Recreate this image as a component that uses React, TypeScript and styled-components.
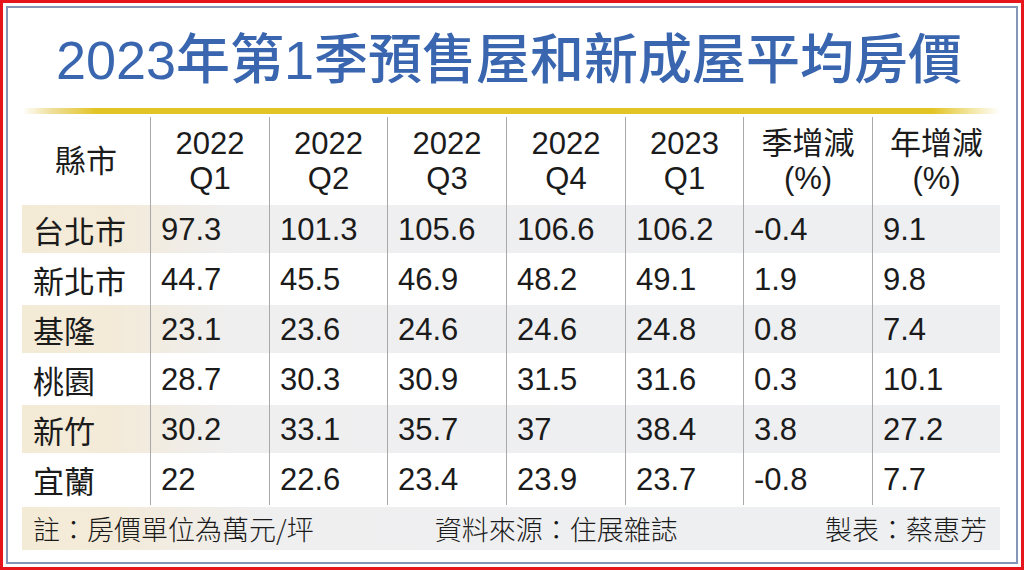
import React from "react";
import styled, { createGlobalStyle } from "styled-components";

const Global = createGlobalStyle`
  html, body { margin: 0; padding: 0; background: #fff; }
  body { font-family: "Liberation Sans", "Noto Sans CJK TC", sans-serif; }
  * { box-sizing: border-box; }
`;

const Frame = styled.div`
  width: 1024px;
  height: 570px;
  border: 3px solid #e6151c;
  padding: 3px;
  background: #fff;
`;

const Inner = styled.div`
  height: 100%;
  border: 2px solid #8396b8;
  padding: 26px 16px 0 14px;
  display: flex;
  flex-direction: column;
`;

const Title = styled.h1`
  margin: 0;
  height: 52px;
  line-height: 52px;
  font-size: 54px;
  font-weight: 500;
  color: #3a66b0;
  text-align: center;
  font-family: "Liberation Sans", "Noto Sans CJK TC", sans-serif;
  padding-right: 4px;
`;

const GoldLine = styled.div`
  margin-top: 22px;
  height: 6px;
  background: linear-gradient(
    90deg,
    rgba(227, 197, 33, 0) 0,
    rgba(232, 208, 110, 0.7) 30px,
    #e2c424 75px,
    #e2c424 910px,
    rgba(227, 197, 33, 0) 978px
  );
`;

const Table = styled.div`
  margin-top: 3px;
  display: flex;
  flex-direction: column;
  color: #1b1b1b;
`;

const cols = "128px 119px 118px 119px 119px 118px 129px 128px";

const HeadRow = styled.div`
  display: grid;
  grid-template-columns: ${cols};
  height: 88px;
`;

const HeadCell = styled.div<{ $first?: boolean }>`
  display: flex;
  flex-direction: column;
  align-items: center;
  justify-content: center;
  font-size: 31px;
  line-height: 35px;
  border-left: ${(p) => (p.$first ? "none" : "1px solid #a9a9a9")};
`;

const Row = styled.div<{ $shade?: boolean }>`
  display: grid;
  grid-template-columns: ${cols};
  height: 50px;
  background: ${(p) =>
    p.$shade
      ? "linear-gradient(180deg, transparent 48px, #fff 48px), linear-gradient(90deg, #f4ebd7 0, #f3ead8 90px, #efeff0 210px, #eeeff1 100%)"
      : "transparent"};
`;

const Cell = styled.div<{ $first?: boolean }>`
  display: flex;
  align-items: center;
  padding-left: ${(p) => (p.$first ? "11px" : "10px")};
  padding-bottom: 1px;
  font-size: 31px;
  border-left: ${(p) => (p.$first ? "none" : "1px solid #a9a9a9")};
  white-space: nowrap;
`;

const Footer = styled.div`
  margin-top: 2px;
  height: 43px;
  display: flex;
  align-items: center;
  padding: 0 13px 0 11px;
  font-size: 27px;
  font-family: "Noto Sans CJK TC", "Liberation Sans", sans-serif;
  font-weight: 300;
  color: #1b1b1b;
  background: linear-gradient(90deg, #f4ebd7 0, #f3ead8 90px, #efeff0 240px, #eeeff1 100%);
`;

const FootNote = styled.span<{ $gap?: string; $auto?: boolean }>`
  margin-left: ${(p) => (p.$auto ? "auto" : p.$gap || "0")};
  white-space: nowrap;
`;

const headers: string[][] = [
  ["縣市"],
  ["2022", "Q1"],
  ["2022", "Q2"],
  ["2022", "Q3"],
  ["2022", "Q4"],
  ["2023", "Q1"],
  ["季增減", "(%)"],
  ["年增減", "(%)"],
];

const data: string[][] = [
  ["台北市", "97.3", "101.3", "105.6", "106.6", "106.2", "-0.4", "9.1"],
  ["新北市", "44.7", "45.5", "46.9", "48.2", "49.1", "1.9", "9.8"],
  ["基隆", "23.1", "23.6", "24.6", "24.6", "24.8", "0.8", "7.4"],
  ["桃園", "28.7", "30.3", "30.9", "31.5", "31.6", "0.3", "10.1"],
  ["新竹", "30.2", "33.1", "35.7", "37", "38.4", "3.8", "27.2"],
  ["宜蘭", "22", "22.6", "23.4", "23.9", "23.7", "-0.8", "7.7"],
];

export default function App() {
  return (
    <>
      <Global />
      <Frame>
        <Inner>
          <Title>2023年第1季預售屋和新成屋平均房價</Title>
          <GoldLine />
          <Table>
            <HeadRow>
              {headers.map((h, i) => (
                <HeadCell key={i} $first={i === 0}>
                  {h.map((line, j) => (
                    <span key={j}>{line}</span>
                  ))}
                </HeadCell>
              ))}
            </HeadRow>
            {data.map((r, i) => (
              <Row key={i} $shade={i % 2 === 0}>
                {r.map((v, j) => (
                  <Cell key={j} $first={j === 0}>
                    {v}
                  </Cell>
                ))}
              </Row>
            ))}
          </Table>
          <Footer>
            <FootNote>註：房價單位為萬元/坪</FootNote>
            <FootNote $gap="121px">資料來源：住展雜誌</FootNote>
            <FootNote $auto>製表：蔡惠芳</FootNote>
          </Footer>
        </Inner>
      </Frame>
    </>
  );
}
